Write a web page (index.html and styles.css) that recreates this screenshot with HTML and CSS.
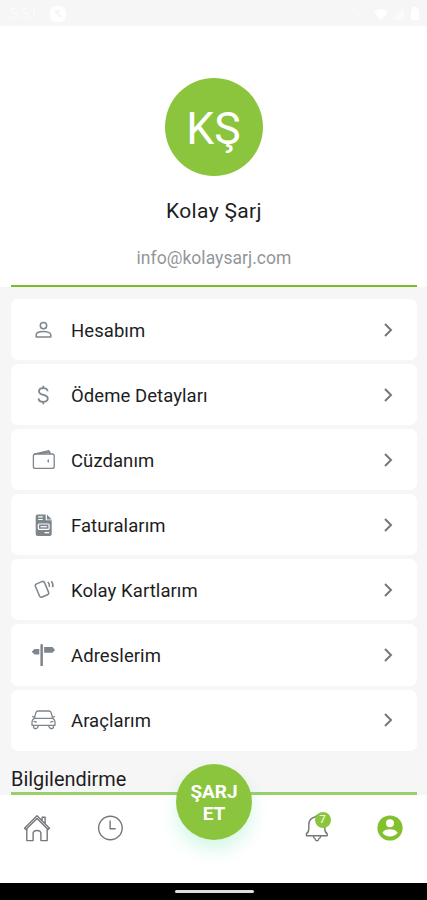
FILE: index.html
```html
<!DOCTYPE html>
<html lang="tr">
<head>
<meta charset="utf-8">
<meta name="viewport" content="width=device-width, initial-scale=1">
<title>Kolay Şarj</title>
<link rel="stylesheet" href="styles.css">
</head>
<body>
<div class="phone">
  <header class="status">
    <span class="time">5:51</span>
    <svg class="status-app" width="18" height="18" viewBox="0 0 18 18"><rect x="1" y="1" width="16" height="16" rx="6" fill="#fff"/><path d="M6 6l6 6M7 6h4" stroke="#f3f3f3" stroke-width="1.5" fill="none"/></svg>
    <svg class="status-system" width="70" height="16" viewBox="0 0 70 16"><path d="M3 2l6 6-3 6M3 7l4-3" stroke="#fbfbfb" fill="none"/><path d="M24 6q7-6 14 0l-7 8z" fill="#fff"/><path d="M42 14l12-12v12z" fill="#fafafa"/><path d="M61 3h2V1h4v2h2v11h-8z" fill="#fff"/></svg>
  </header>

  <section class="profile">
    <div class="avatar">KŞ</div>
    <h1 class="name">Kolay Şarj</h1>
    <p class="email">info@kolaysarj.com</p>
  </section>

  <main class="menu">
    <a class="item">
      <svg class="icon" viewBox="0 0 26 26"><circle cx="13.5" cy="8.6" r="3.2"/><path d="M6.2 20v-2.1c0-4.5 14.6-4.5 14.6 0V20z"/></svg>
      <span class="label">Hesabım</span>
      <svg class="chevron" viewBox="0 0 10 16"><path d="M2 2l6 6-6 6"/></svg>
    </a>
    <a class="item">
      <svg class="icon dollar" viewBox="0 0 26 26"><path d="M17.6 9.3C17.3 5.2 9 5.1 9 9.4c0 4.4 8.8 2.5 8.8 7 0 4.6-9.1 4.5-9.3 0M13.3 3.7v2.5M13.3 19.7v2.6"/></svg>
      <span class="label">Ödeme Detayları</span>
      <svg class="chevron" viewBox="0 0 10 16"><path d="M2 2l6 6-6 6"/></svg>
    </a>
    <a class="item">
      <svg class="icon wallet" viewBox="0 0 26 26"><rect x="3.4" y="7" width="20.8" height="14.4" rx="2"/><path d="M4 7.2L18 3.8q1.5-.2 1.7 1.2l.4 2M8.6 6.9l11-1.8"/><path class="solid" d="M19 12.2a1.7 1.7 0 1 0 0 3.4z"/></svg>
      <span class="label">Cüzdanım</span>
      <svg class="chevron" viewBox="0 0 10 16"><path d="M2 2l6 6-6 6"/></svg>
    </a>
    <a class="item">
      <svg class="icon" viewBox="0 0 26 26"><path class="fill" d="M7.5 2.6h8.2v5.6h6v13.7q0 2-2 2h-12q-2 0-2-2V4.6q0-2 1.8-2zM16.9 2.6l4.8 4.8h-4.8z"/><path class="cut" d="M8.2 4.9h4.5M8.2 7.5h4.5M14.5 20.7h4.7"/><rect class="cut" x="8.3" y="12" width="10.8" height="5.3" rx="1"/><path class="cut" d="M10.5 14.7h6.4"/></svg>
      <span class="label">Faturalarım</span>
      <svg class="chevron" viewBox="0 0 10 16"><path d="M2 2l6 6-6 6"/></svg>
    </a>
    <a class="item">
      <svg class="icon card" viewBox="0 0 26 26"><rect x="7.1" y="5.2" width="9.8" height="14.3" rx="2" transform="rotate(-23 11.9 12.3)"/><path d="M17.8 5q2.2 2 1.5 4.9M21.3 4.2q2.3 2.5 1.4 6"/></svg>
      <span class="label">Kolay Kartlarım</span>
      <svg class="chevron" viewBox="0 0 10 16"><path d="M2 2l6 6-6 6"/></svg>
    </a>
    <a class="item">
      <svg class="icon" viewBox="0 0 26 26"><path class="fill" d="M10.4 2.4q1.3-1 2.5 0V24h-2.5zM14.1 5h8.4l2.5 2.9-2.5 2.9h-8.4zM9.3 7H4.6L1.7 9.8l2.9 2.8h4.7z"/></svg>
      <span class="label">Adreslerim</span>
      <svg class="chevron" viewBox="0 0 10 16"><path d="M2 2l6 6-6 6"/></svg>
    </a>
    <a class="item">
      <svg class="icon car" viewBox="0 0 26 26"><path d="M4.3 11.3L5.8 5.8Q6.3 4 8.2 4h10.6q1.9 0 2.4 1.8l1.5 5.5M4.3 11.3h18.4q2.3 1.2 2.3 3.4v3.6H2v-3.6q0-2.2 2.3-3.4zM3.6 18.3v2.5q1.9 1.8 3.8 0l1.3-2.5M23.4 18.3v2.5q-1.9 1.8-3.8 0l-1.3-2.5M2.2 9.3l2.4 1.2M24.8 9.3l-2.4 1.2M3.6 14.3l3.2.8M23.4 14.3l-3.2.8"/></svg>
      <span class="label">Araçlarım</span>
      <svg class="chevron" viewBox="0 0 10 16"><path d="M2 2l6 6-6 6"/></svg>
    </a>
  </main>

  <h2 class="section-title"><span>Bilgilendirme</span></h2>

  <nav class="tabs">
    <a class="tab"><svg width="28" height="28" viewBox="0 0 28 28"><path d="M1.5 14.3L14 1.8l12.5 12.5-1.4 1.3L14 4.6 2.9 15.6zM3.8 15v11.6h6.3v-7q0-3.1 3.9-3.1t3.9 3.1v7h6.3V15M19.1 6.3V3.2h3v6.5"/></svg></a>
    <a class="tab"><svg width="28" height="28" viewBox="0 0 28 28"><circle cx="14.4" cy="14" r="11.8"/><path d="M14.1 6.5v8.2h5.6"/></svg></a>
    <a class="charge"><span>ŞARJ</span><span>ET</span></a>
    <a class="tab bell"><svg width="28" height="28" viewBox="0 0 28 28"><path d="M3.4 21.7v-2q2.4-1.4 2.4-5V11q0-6.7 6.7-8.2 1.5-2 3 0Q21.8 4.3 21.8 11v3.7q0 3.6 2.4 5v2zM10.3 22.1q0 2.2 1.8 2.5.5 2.3 1.9 2.3t1.9-2.3q1.8-.3 1.8-2.5"/></svg><span class="badge">7</span></a>
    <a class="tab"><svg class="user" width="28" height="28" viewBox="0 0 28 28"><circle class="disc" cx="14" cy="14" r="12.6"/><circle class="hole" cx="14" cy="9.2" r="4"/><path class="hole" d="M6.4 18.7c2.2-4.6 13-4.6 15.2 0-3.6 5.1-11.6 5.1-15.2 0z"/></svg></a>
  </nav>
  <footer class="gesture"><span class="handle"></span></footer>
</div>
</body>
</html>
```

FILE: styles.css
```css
* { box-sizing: border-box; }

body {
  margin: 0;
  font-family: Roboto, "Noto Sans", sans-serif;
  color: #1d1d1f;
}

.phone {
  display: flex;
  flex-direction: column;
  width: 427px;
  height: 900px;
  overflow: hidden;
  background: #f6f6f6;
}

svg { fill: none; }

.status {
  display: flex;
  align-items: center;
  flex: 0 0 26px;
  padding: 2px 7px 0 9px;
  color: #fbfbfb;
  font-size: 15px;
}
.time { width: 40px; }
.status-system { margin-left: auto; }

.profile {
  display: flex;
  flex-direction: column;
  align-items: center;
  flex: 0 0 261px;
  padding-top: 52px;
  background: linear-gradient(#79bb2c, #79bb2c) center bottom / 406px 2px no-repeat #fff;
}
.avatar {
  width: 98px;
  height: 98px;
  border-radius: 50%;
  background: #8bc53d;
  color: #fff;
  font-size: 44.5px;
  line-height: 102px;
  text-align: center;
}
.name {
  margin: 21px 0 0;
  padding-left: 1px;
  font-size: 21px;
  font-weight: 400;
  line-height: 28px;
  letter-spacing: .35px;
}
.email {
  margin: 22px 0 0;
  padding-left: 1px;
  color: #92969b;
  font-size: 17.5px;
  line-height: 22px;
  letter-spacing: .04px;
}

.menu {
  display: flex;
  flex-direction: column;
  gap: 4px;
  padding: 12px 10px 0 11px;
}
.item {
  display: flex;
  align-items: center;
  height: 61.1px;
  padding: 0 24px 0 19px;
  border-radius: 7px;
  background: #fff;
}
.icon {
  width: 26px;
  height: 26px;
  margin-right: 15px;
  stroke: #7d858d;
  stroke-width: 1.5;
  stroke-linejoin: round;
}
.icon .fill { fill: #7d858d; stroke: none; }
.icon .solid { fill: #7d858d; stroke: none; }
.icon .cut { stroke: #fff; stroke-width: 1.2; }
.icon.dollar { stroke-width: 1.8; }
.icon.wallet, .icon.car { stroke-width: 1.3; }
.label {
  flex: 1;
  padding-top: 2px;
  font-size: 18.5px;
  line-height: 24px;
  letter-spacing: .07px;
}
.chevron {
  width: 10px;
  height: 16px;
  stroke: #74787d;
  stroke-width: 2;
}

.section-title {
  display: flex;
  align-items: flex-end;
  height: 44px;
  margin: 0 10px 0 11px;
  border-bottom: 3px solid #97d06a;
  font-size: 19.9px;
  font-weight: 400;
  line-height: 25px;
}

.tabs {
  display: grid;
  grid-template-columns: 74px 72px 136px 69px 78px;
  justify-items: center;
  flex: 0 0 88px;
  background: #fff;
}
.tab {
  position: relative;
  width: 28px;
  height: 28px;
  margin-top: 19px;
}
.tab svg {
  display: block;
  stroke: #77777b;
  stroke-width: 1.4;
  stroke-linejoin: round;
}
.charge {
  display: flex;
  flex-direction: column;
  align-items: center;
  justify-content: center;
  width: 76px;
  height: 76px;
  margin-top: -31px;
  padding-top: 3px;
  border-radius: 50%;
  background: #8bc53d;
  box-shadow: 0 10px 18px rgba(65, 220, 140, .22);
  color: #fff;
  font-size: 19px;
  font-weight: 700;
  line-height: 22px;
  z-index: 1;
}
.badge {
  position: absolute;
  top: -2px;
  left: 12px;
  width: 16px;
  height: 16px;
  border-radius: 50%;
  background: #8bc53d;
  color: #fff;
  font-size: 11px;
  line-height: 16px;
  text-align: center;
}
.tab .user { stroke: none; }
.disc { fill: #83c02d; }
.hole { fill: #fff; }

.gesture {
  display: flex;
  align-items: center;
  justify-content: center;
  flex: 1;
  padding: 1px 0 0 1px;
  background: #000;
}
.handle {
  width: 79px;
  height: 3px;
  border-radius: 2px;
  background: #dedede;
}
```
